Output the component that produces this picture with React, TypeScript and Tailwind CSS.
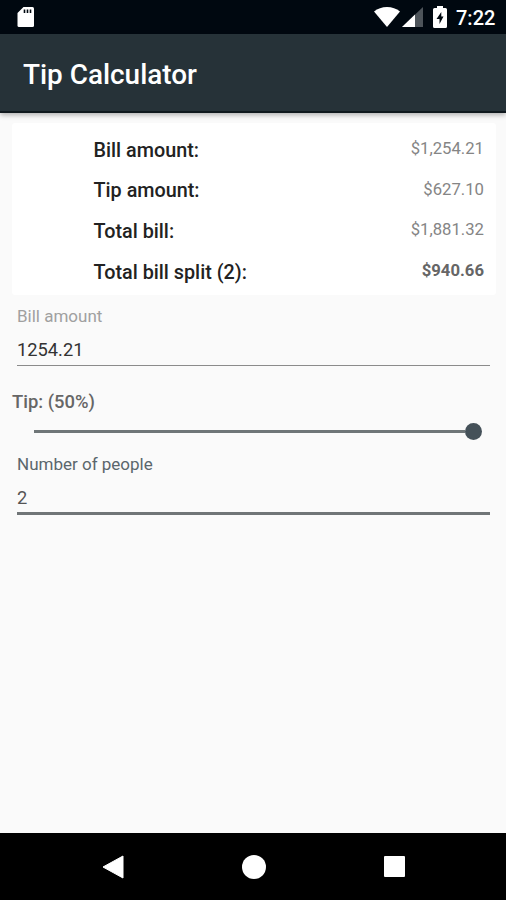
import clsx from "clsx";

const SUMMARY = [
  { label: "Bill amount:", value: "$1,254.21" },
  { label: "Tip amount:", value: "$627.10" },
  { label: "Total bill:", value: "$1,881.32" },
  { label: "Total bill split (2):", value: "$940.66", strong: true },
];

function StatusBar() {
  return (
    <div className="flex h-[34px] shrink-0 items-center bg-[#000810] pr-[10px] pl-[17px] text-white">
      <svg width="18" height="22" viewBox="0 0 18 22">
        <path d="M6.5 1H15.5Q17 1 17 2.5V19.5Q17 21 15.5 21H2Q.5 21 .5 19.5V7Z" fill="#fff" />
        <path d="M6.7 3.5h1.6v3.500h-1.600zM9.700 3.500h1.600v3.500h-1.600zM12.700 3.500h1.600v3.500h-1.600z" fill="#000810" />
      </svg>
      <div className="ml-auto flex items-center">
        {/* wifi */}
        <svg width="26" height="20" viewBox="0 0 26 20">
          <path d="M0 4.5Q5.5 0 13 0T26 4.5L13 20Z" fill="#fff" />
        </svg>
        {/* signal */}
        <svg className="ml-[2px]" width="21" height="20" viewBox="0 0 21 20">
          <path d="M0 20L21 0V20Z" fill="#4d545a" />
          <path d="M0 20L13 7.6V20Z" fill="#fff" />
        </svg>
        {/* battery */}
        <svg className="ml-[10px]" width="14" height="22" viewBox="0 0 14 22">
          <path d="M4 0h6v2h2.5Q14 2 14 3.5v17Q14 22 12.5 22h-11Q0 22 0 20.5v-17Q0 2 1.5 2H4Z" fill="#fff" />
          <path d="M8.3 6L3.5 13h3v5L10.5 10.500H8.300Z" fill="#000810" />
        </svg>
        <span className="ml-[9px] w-[40px] pt-[2px] text-[20px] leading-[34px] font-medium whitespace-nowrap">7:22</span>
      </div>
    </div>
  );
}

function Summary() {
  return (
    <div className="mr-[10px] ml-[12px] mt-[10px] h-[172px] rounded-[3px] bg-white pt-[7px] pr-[12px] pl-[81.5px]">
      {SUMMARY.map((row) => (
        <div key={row.label} className="flex h-[40.7px] items-center justify-between">
          <span className="text-[19.8px] font-medium text-[#222]">{row.label}</span>
          <span
            className={clsx(
              "-mt-[4px] text-[16.7px]",
              row.strong ? "font-bold text-[#666]" : "text-[#858585]",
            )}
          >
            {row.value}
          </span>
        </div>
      ))}
    </div>
  );
}

function Field({ label, value, focused }: { label: string; value: string; focused?: boolean }) {
  return (
    <div
      className={clsx(
        "mr-[16px] ml-[17px]",
        focused ? "h-[63px] border-b-3 border-[#707577]" : "h-[62px] border-b-[1.5px] border-[#8b8b8b]",
      )}
    >
      <div className={clsx("text-[17px] leading-[24px]", focused ? "text-[#5b666c]" : "text-[#a0a0a0]")}>
        {label}
      </div>
      <div className={clsx("pt-[10px] text-[18.3px] leading-[24px]", focused ? "text-[#555]" : "text-[#333]")}>
        {value}
      </div>
    </div>
  );
}

function TipSlider() {
  return (
    <div className="mr-[24px] ml-[34px] flex h-[18px] items-center">
      <div className="h-[3px] flex-1 bg-[#6f7678]" />
      <div className="size-[17px] rounded-full bg-[#455159]" />
    </div>
  );
}

function NavBar() {
  return (
    <div className="mt-auto flex h-[67px] shrink-0 items-center justify-between bg-black pr-[101px] pl-[102px]">
      <svg width="22" height="24" viewBox="0 0 22 24">
        <path d="M1 12L21 1V23Z" fill="#fff" stroke="#fff" strokeLinejoin="round" />
      </svg>
      <div className="size-[24px] rounded-full bg-white" />
      <div className="size-[21px] rounded-[1px] bg-white" />
    </div>
  );
}

export default function App() {
  return (
    <div className="flex h-screen w-full flex-col bg-[#fafafa] font-[Roboto,sans-serif]">
      <StatusBar />
      <header className="flex h-[79px] shrink-0 items-center border-b-2 border-[#10191e] bg-[#263238] pt-[4px] pl-[23px] shadow-[0_2px_5px_rgba(0,0,0,0.3)]">
        <h1 className="text-[27.9px] font-medium text-white">Tip Calculator</h1>
      </header>
      <Summary />
      <div className="mt-[9px]">
        <Field label="Bill amount" value="1254.21" />
      </div>
      <div className="mt-[24px] ml-[12px] text-[18.4px] leading-[24px] font-medium text-[#666]">Tip: (50%)</div>
      <div className="mt-[8px]">
        <TipSlider />
      </div>
      <div className="mt-[12px]">
        <Field label="Number of people" value="2" focused />
      </div>
      <NavBar />
    </div>
  );
}
